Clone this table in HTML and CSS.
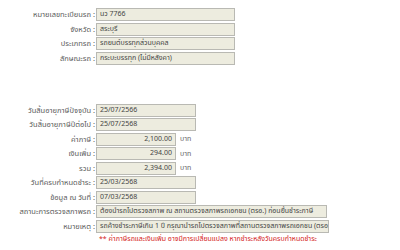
FILE: index.html
```html
<!DOCTYPE html>
<html lang="th">
<head>
<meta charset="utf-8">
<link rel="stylesheet" href="styles.css">
</head>
<body>
<div class="form">
  <div class="row"><div class="lbl">หมายเลขทะเบียนรถ :</div><div class="box w-md">นว 7766</div></div>
  <div class="row"><div class="lbl">จังหวัด :</div><div class="box w-md">สระบุรี</div></div>
  <div class="row"><div class="lbl">ประเภทรถ :</div><div class="box w-md">รถยนต์บรรทุกส่วนบุคคล</div></div>
  <div class="row"><div class="lbl">ลักษณะรถ :</div><div class="box w-md">กระบะบรรทุก (ไม่มีหลังคา)</div></div>
  <div class="spacer"></div>
  <div class="row"><div class="lbl">วันสิ้นอายุภาษีปัจจุบัน :</div><div class="box w-sm">25/07/2566</div></div>
  <div class="row"><div class="lbl">วันสิ้นอายุภาษีปีต่อไป :</div><div class="box w-sm">25/07/2568</div></div>
  <div class="row"><div class="lbl">ค่าภาษี :</div><div class="box w-num num">2,100.00</div><div class="unit">บาท</div></div>
  <div class="row"><div class="lbl">เงินเพิ่ม :</div><div class="box w-num num">294.00</div><div class="unit">บาท</div></div>
  <div class="row"><div class="lbl">รวม :</div><div class="box w-num num">2,394.00</div><div class="unit">บาท</div></div>
  <div class="row"><div class="lbl">วันที่ครบกำหนดชำระ :</div><div class="box w-sm">25/03/2568</div></div>
  <div class="row"><div class="lbl">ข้อมูล ณ วันที่ :</div><div class="box w-sm">07/03/2568</div></div>
  <div class="row"><div class="lbl">สถานะการตรวจสภาพรถ :</div><div class="box w-lg">ต้องนำรถไปตรวจสภาพ ณ สถานตรวจสภาพรถเอกชน (ตรอ.) ก่อนยื่นชำระภาษี</div></div>
  <div class="row"><div class="lbl">หมายเหตุ :</div><div class="box w-xl">รถค้างชำระภาษีเกิน 1 ปี กรุณานำรถไปตรวจสภาพที่สถานตรวจสภาพรถเอกชน (ตรอ.) ก่อนยื่นชำระภาษี</div></div>
  <div class="row note-row"><div class="lbl"></div><div class="note">** ค่าภาษีรถและเงินเพิ่ม อาจมีการเปลี่ยนแปลง หากชำระหลังวันครบกำหนดชำระ</div></div>
</div>
</body>
</html>
```
FILE: styles.css
```css
html, body {
  margin: 0;
  padding: 0;
  background: #ffffff;
}
body {
  font-family: Tahoma, "Noto Sans Thai", "DejaVu Sans", sans-serif;
  font-size: 7.5px;
  color: #5a5a5a;
}
.form {
  display: flex;
  flex-direction: column;
  padding-top: 8px;
  gap: 1.5px;
}
.row {
  display: flex;
  align-items: center;
  height: 13px;
}
.lbl {
  width: 96px;
  flex: none;
  text-align: right;
  padding-right: 1px;
  box-sizing: border-box;
  white-space: nowrap;
}
.box {
  box-sizing: border-box;
  flex: none;
  height: 13px;
  line-height: 11px;
  font-size: 7px;
  background: #edecdf;
  border: 1px solid #b9b9b3;
  padding: 0 3px;
  color: #444444;
  white-space: nowrap;
  overflow: hidden;
}
.w-md { width: 139px; }
.w-sm { width: 100px; }
.w-num { width: 80px; }
.w-lg { width: 231px; }
.w-xl { width: 233px; }
.num { text-align: right; }
.unit {
  padding-left: 4px;
  color: #666666;
  font-size: 7px;
}
.spacer { height: 36px; }
.note-row { height: 9px; }
.note {
  padding-left: 3px;
  color: #d42020;
  white-space: nowrap;
  font-size: 7px;
}
```
